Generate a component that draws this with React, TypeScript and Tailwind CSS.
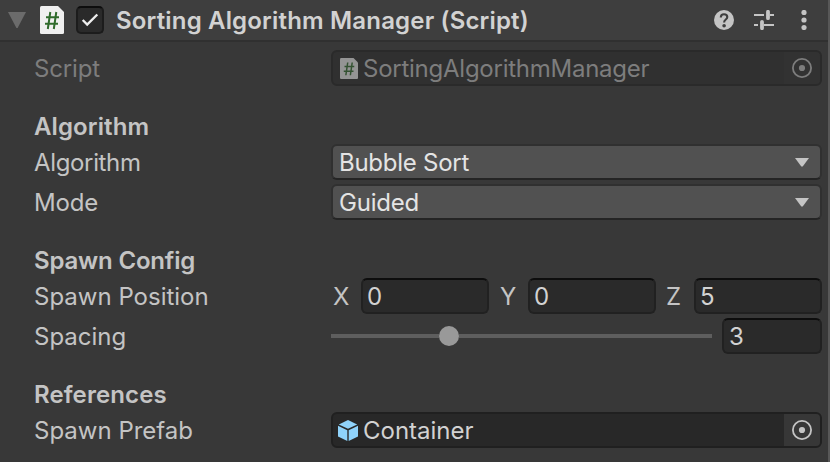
import type { ReactNode } from "react";

function ScriptIcon({ className, fill, ink }: { className: string; fill: string; ink: string }) {
  return (
    <svg className={className} viewBox="0 0 24 28">
      <path d="M1.5 0H18L24 6V26.5Q24 28 22.5 28H1.5Q0 28 0 26.5V1.5Q0 0 1.5 0Z" fill={fill} />
      <path d="M10.3 6L7.8 23M16.3 6L13.8 23M6 11.3H19M5 17.7H18" stroke={ink} strokeWidth="2" fill="none" />
    </svg>
  );
}

function Heading({ children, tracking = "" }: { children: ReactNode; tracking?: string }) {
  return <h2 className={`h-[54px] pt-[18px] pl-[34px] leading-[38px] font-semibold ${tracking}`}>{children}</h2>;
}

function Row({ label, dim, tracking = "", children }: { label: string; dim?: boolean; tracking?: string; children: ReactNode }) {
  return (
    <div className="mb-1 flex h-9 pl-[34px]">
      <div className={`w-[297px] shrink-0 leading-[38px] ${tracking} ${dim ? "text-[#7d7d7d]" : ""}`}>{label}</div>
      <div className="flex w-[491px] shrink-0">{children}</div>
    </div>
  );
}

function Dropdown({ value, tracking }: { value: string; tracking: string }) {
  return (
    <div className="flex h-9 w-full items-center justify-between rounded-md border-2 border-[#303030] border-b-[#242424] bg-[#515151] pr-[11px] pl-1.5 text-[#e4e4e4]">
      <span className={`h-8 leading-[34px] ${tracking}`}>{value}</span>
      <svg className="h-[9px] w-[14px]" viewBox="0 0 14 9">
        <path d="M0 0H14L7.7 8.6H6.3Z" fill="#c4c4c4" />
      </svg>
    </div>
  );
}

function NumberField({ value, className }: { value: string; className: string }) {
  return (
    <div className={`h-9 shrink-0 rounded-md border-2 border-[#212121] border-t-[#0d0d0d] bg-[#2a2a2a] leading-[34px] text-[#d2d2d2] ${className}`}>
      {value}
    </div>
  );
}

function Target({ color }: { color: string }) {
  return (
    <svg className="size-5" viewBox="0 0 20 20" fill="none">
      <circle cx="10" cy="10" r="9.1" stroke={color} strokeWidth="1.8" />
      <circle cx="10" cy="10" r="3.1" fill={color} />
    </svg>
  );
}

export default function App() {
  return (
    <div className="flex h-[462px] w-[830px] overflow-hidden bg-[#383838] font-['Inter',sans-serif] text-2xl whitespace-nowrap text-[#c4c4c4]">
      <main className="w-[828px] shrink-0">
        <header className="flex h-[42px] items-center border-b-2 border-[#303030] bg-[#3e3e3e] pl-2">
          <svg className="h-4 w-[18px]" viewBox="0 0 18 16">
            <path d="M0 0H18L9.6 16H8.4Z" fill="#6b6b6b" />
          </svg>
          <ScriptIcon className="ml-3.5 h-7 w-6" fill="#f0f0f0" ink="#306b2c" />
          <div className="ml-3 flex size-7 items-center justify-center rounded-[5px] border-2 border-[#1c1c1c] border-t-[#0d0d0d] bg-[#2a2a2a]">
            <svg className="h-3.5 w-[18px]" viewBox="0 0 18 14" fill="none">
              <path d="M1.7 7L6.2 11.5L16.3 1.5" stroke="#eeeeee" strokeWidth="2.4" />
            </svg>
          </div>
          <h1 className="ml-3 h-10 leading-[42px] font-semibold tracking-[0.17px] text-[#d2d2d2]">Sorting Algorithm Manager (Script)</h1>
          <div className="mr-[21px] ml-auto flex items-center">
            <svg className="size-5" viewBox="0 0 20 20" fill="none">
              <circle cx="10" cy="10" r="10" fill="#c4c4c4" />
              <path d="M6.8 7.4Q6.8 4.2 10 4.2Q13.3 4.2 13.3 7Q13.3 8.4 11.8 9.5Q10.1 10.7 10.1 12.5" stroke="#3e3e3e" strokeWidth="2.1" />
              <circle cx="10.1" cy="15.7" r="1.8" fill="#3e3e3e" />
            </svg>
            <svg className="ml-5 size-5" viewBox="0 0 20 20" fill="none" stroke="#c4c4c4">
              <path d="M0 5H10M16 5H20M0 15H4M10 15H20" strokeWidth="2" />
              <path d="M14 1.8V8.2M8 11.8V18.2" strokeWidth="3.8" strokeLinecap="round" />
            </svg>
            <svg className="ml-[27px] h-5 w-1.5" viewBox="0 0 6 20" fill="#c4c4c4">
              <circle cx="3" cy="2.5" r="2.6" />
              <circle cx="3" cy="10" r="2.6" />
              <circle cx="3" cy="17.5" r="2.6" />
            </svg>
          </div>
        </header>

        <section className="pt-2">
          <Row label="Script" dim tracking="tracking-[-0.15px]">
            <div className="flex h-9 w-full items-center rounded-md border-2 border-[#2a2a2a] bg-[#303030] pl-[7px] text-[#7d7d7d]">
              <ScriptIcon className="h-[21px] w-[18px]" fill="#949494" ink="#345232" />
              <span className="ml-[5px] h-8 leading-[34px] tracking-[-0.25px]">SortingAlgorithmManager</span>
              <div className="ml-auto flex h-8 w-9 items-center justify-center rounded-r-sm bg-[#323232]">
                <Target color="#7d7d7d" />
              </div>
            </div>
          </Row>

          <Heading tracking="tracking-[0.1px]">Algorithm</Heading>
          <Row label="Algorithm" tracking="tracking-[-0.35px]">
            <Dropdown value="Bubble Sort" tracking="tracking-[-0.26px]" />
          </Row>
          <Row label="Mode" tracking="tracking-[-0.2px]">
            <Dropdown value="Guided" tracking="tracking-[-0.2px]" />
          </Row>

          <Heading tracking="tracking-[-0.18px]">Spawn Config</Heading>
          <Row label="Spawn Position">
            <span className="w-[30px] shrink-0 pl-0.5 leading-[38px]">X</span>
            <NumberField value="0" className="w-32 pl-1" />
            <span className="w-[39px] shrink-0 pl-[11px] leading-[38px]">Y</span>
            <NumberField value="0" className="w-32 pl-1" />
            <span className="w-[38px] shrink-0 pl-2.5 leading-[38px]">Z</span>
            <NumberField value="5" className="w-32 pl-1" />
          </Row>
          <Row label="Spacing">
            <div className="mr-2.5 flex h-9 w-[381px] items-center">
              <div className="h-1 w-[108px] bg-[#5e5e5e]" />
              <div className="size-5 rounded-full bg-[#999999]" />
              <div className="h-1 flex-1 bg-[#5e5e5e]" />
            </div>
            <NumberField value="3" className="w-[100px] pl-[5px]" />
          </Row>

          <Heading tracking="tracking-[0.1px]">References</Heading>
          <Row label="Spawn Prefab">
            <div className="flex h-9 w-full items-center rounded-md border-2 border-[#202020] bg-[#282828] pl-[5px] text-[#d2d2d2]">
              <svg className="h-[21px] w-5" viewBox="0 0 20 21" fill="#8fd3fb">
                <path d="M10 0L19.2 4.4L10 8.8L0.8 4.4Z" />
                <path d="M0 5.8L9.3 10.2V21L0 16.4Z" />
                <path d="M20 5.8L10.7 10.2V21L20 16.4Z" />
              </svg>
              <span className="ml-[5px] h-8 leading-[34px]">Container</span>
              <div className="ml-auto flex h-8 w-9 items-center justify-center rounded-r-sm bg-[#373737]">
                <Target color="#c4c4c4" />
              </div>
            </div>
          </Row>
        </section>
      </main>
      <div className="w-0.5 bg-[#585858]" />
    </div>
  );
}
